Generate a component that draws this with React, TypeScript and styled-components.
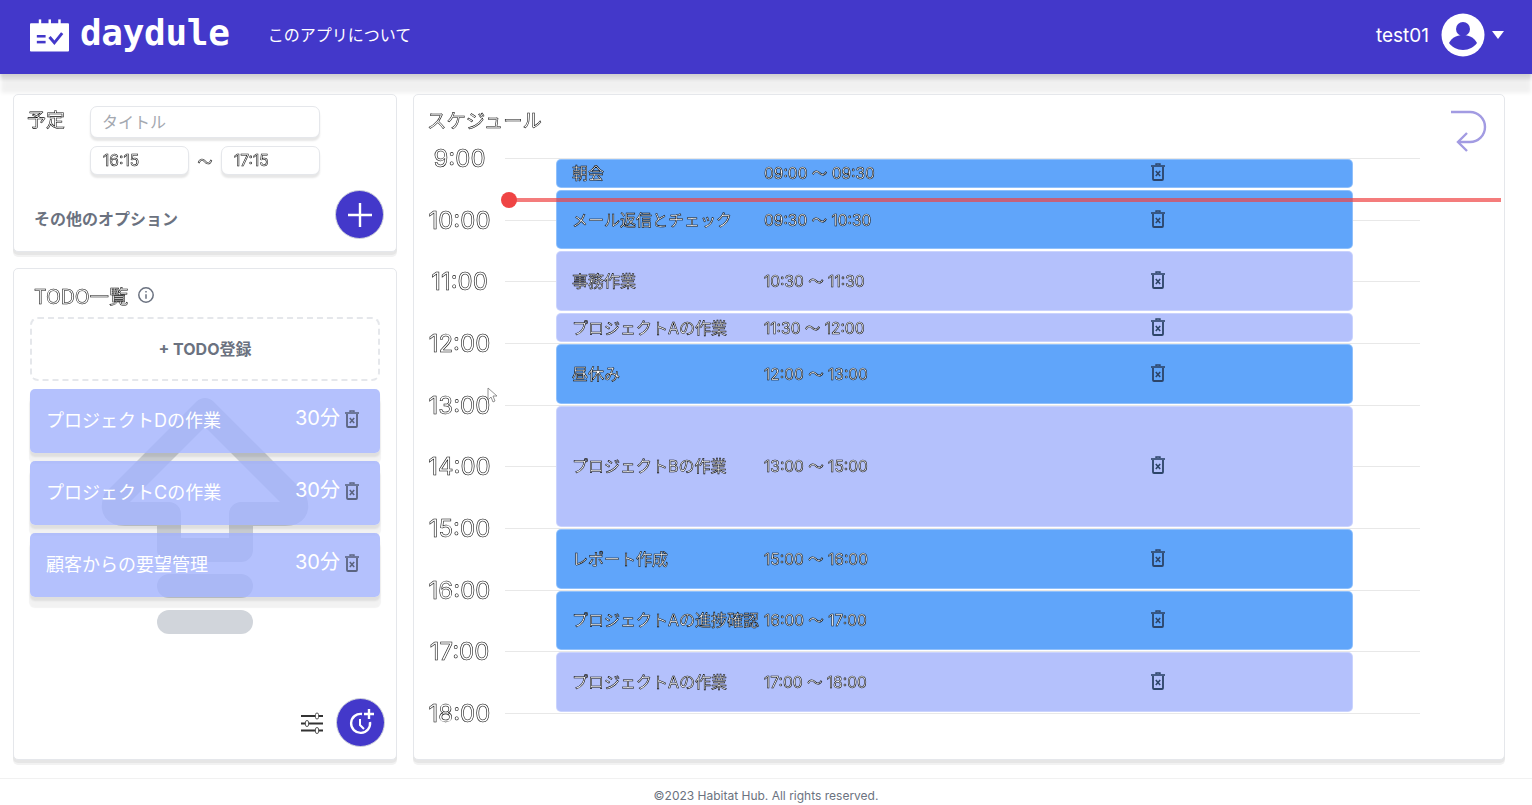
import styled, { createGlobalStyle } from "styled-components";

const GlobalStyle = createGlobalStyle`
  html, body {
    margin: 0;
    padding: 0;
    background: #fff;
    font-family: "Inter", "Noto Sans CJK JP", sans-serif;
  }
  * { box-sizing: border-box; }
`;

const HOUR = 61.67;
const HOURS = ["9:00", "10:00", "11:00", "12:00", "13:00", "14:00", "15:00", "16:00", "17:00", "18:00"];
const EVENTS = [
  { title: "朝会", time: "09:00 〜 09:30", hours: 0.5, tone: "blue" },
  { title: "メール返信とチェック", time: "09:30 〜 10:30", hours: 1, tone: "blue" },
  { title: "事務作業", time: "10:30 〜 11:30", hours: 1, tone: "lilac" },
  { title: "プロジェクトAの作業", time: "11:30 〜 12:00", hours: 0.5, tone: "lilac" },
  { title: "昼休み", time: "12:00 〜 13:00", hours: 1, tone: "blue" },
  { title: "プロジェクトBの作業", time: "13:00 〜 15:00", hours: 2, tone: "lilac" },
  { title: "レポート作成", time: "15:00 〜 16:00", hours: 1, tone: "blue" },
  { title: "プロジェクトAの進捗確認", time: "16:00 〜 17:00", hours: 1, tone: "blue" },
  { title: "プロジェクトAの作業", time: "17:00 〜 18:00", hours: 1, tone: "lilac" },
];
const TODOS = ["プロジェクトDの作業", "プロジェクトCの作業", "顧客からの要望管理"];

const Page = styled.div`
  display: flex;
  flex-direction: column;
  height: 805px;
  overflow: hidden;
`;

const Header = styled.header`
  height: 74px;
  flex: none;
  display: flex;
  align-items: center;
  padding: 0 28px 4px 30px;
  background: #4338ca;
  color: #fff;
  box-shadow: 0 2px 3px rgba(0, 0, 0, 0.08), 0 6px 3px rgba(0, 0, 0, 0.07), 0 20px 4px -1px rgba(0, 0, 0, 0.06);
`;

const Brand = styled.div`
  display: flex;
  align-items: center;
  gap: 11px;
  font-family: "DejaVu Sans Mono", monospace;
  font-size: 36px;
  font-weight: 700;
  letter-spacing: -0.3px;
  line-height: 40px;
  margin-top: -4px;
`;

const LogoMark = styled.svg`
  margin-top: 3px;
`;

const NavLink = styled.span`
  margin-left: 38px;
  font-size: 16px;
  margin-top: -2px;
`;

const UserBox = styled.div`
  margin-left: auto;
  display: flex;
  align-items: center;
  font-size: 19px;
  gap: 12px;
`;

const Caret = styled.span`
  width: 0;
  height: 0;
  border-left: 6.5px solid transparent;
  border-right: 6.5px solid transparent;
  border-top: 8px solid #fff;
  margin-left: -5px;
`;

const Main = styled.main`
  flex: 1;
  display: grid;
  grid-template-columns: 384px 1092px;
  grid-template-rows: minmax(0, 1fr);
  gap: 16px;
  padding: 20px 0 18px 13px;
  min-height: 0;
  position: relative;
`;

const Column = styled.div`
  display: flex;
  flex-direction: column;
  gap: 16px;
  min-height: 0;
`;

const Card = styled.section`
  position: relative;
  background: #fff;
  border: 1px solid #e5e7eb;
  border-radius: 5px;
  box-shadow: 0 3px 0 #e6e6e6, 0 5px 0 #f2f2f2;
`;

const OutlineText = styled.span`
  display: inline-block;
  color: #fff;
  -webkit-text-stroke: 0.55px #000;
  will-change: transform;
`;

const PlanCard = styled(Card)`
  height: 158px;
  flex: none;
  padding: 11px 12px 0 13px;
`;

const PlanRow = styled.div`
  display: flex;
  gap: 13px;
`;

const PlanLabel = styled(OutlineText)`
  font-size: 19px;
  width: 50px;
  height: 30px;
  line-height: 30px;
`;

const Fields = styled.div`
  display: grid;
  grid-template-columns: 99px 32px 99px;
  grid-template-rows: 32px 29px;
  row-gap: 8px;
  align-items: center;
`;

const Field = styled.div`
  height: 100%;
  display: flex;
  align-items: center;
  border: 1px solid #e5e7eb;
  border-radius: 7px;
  background: #fff;
  box-shadow: 0 3px 2px #e7e7e7;
  font-size: 15.5px;
`;

const TitleField = styled(Field)`
  grid-column: 1 / 4;
  padding-left: 11px;
  padding-bottom: 2px;
  font-size: 16px;
  color: #a4a8b0;
`;

const TimeField = styled(Field)`
  padding-left: 12px;
`;

const Tilde = styled(OutlineText)`
  text-align: center;
  font-size: 15px;
`;

const OptionRow = styled.div`
  display: flex;
  align-items: center;
  justify-content: space-between;
  margin-top: 15px;
  padding-left: 7px;
`;

const OptionLabel = styled.span`
  font-size: 16px;
  font-weight: 700;
  color: #6b7280;
  margin-top: 6px;
`;

const RoundButton = styled.div`
  width: 49px;
  height: 49px;
  border-radius: 50%;
  background: #4338ca;
  border: 1px solid #d1d5db;
  display: flex;
  align-items: center;
  justify-content: center;
`;

const TodoCard = styled(Card)`
  flex: 1;
  min-height: 0;
  padding: 13px 16px 0 16px;
  display: flex;
  flex-direction: column;
`;

const TodoHeading = styled.div`
  display: flex;
  align-items: center;
  gap: 9px;
  padding-left: 4px;
  height: 26px;
`;

const HeadingText = styled(OutlineText)`
  font-size: 19.4px;
`;

const AddTodo = styled.div`
  margin-top: 9px;
  height: 64px;
  border: 2px dashed #e5e7eb;
  border-radius: 8px;
  display: flex;
  align-items: center;
  justify-content: center;
  color: #6b7280;
  font-size: 16px;
  font-weight: 700;
  padding-bottom: 2px;
`;

const TodoList = styled.div`
  margin-top: 8px;
  display: flex;
  flex-direction: column;
  gap: 8px;
  position: relative;
  z-index: 1;
`;

const TodoItem = styled.div`
  height: 64px;
  border-radius: 5px;
  background: rgba(159, 176, 252, 0.78);
  box-shadow: 0 4px 2px rgba(0, 0, 0, 0.08), 0 10px 1px 1px rgba(0, 0, 0, 0.05);
  display: flex;
  align-items: center;
  color: #fff;
  padding: 0 21px 0 16px;
`;

const TodoTitle = styled.span`
  font-size: 18px;
  margin-top: -4px;
  flex: 1;
`;

const TodoMinutes = styled.span`
  font-size: 20px;
  margin-top: -10px;
  margin-right: 5px;
`;

const TodoTrash = styled.span`
  display: flex;
  margin-top: -5px;
`;

const DragGhost = styled.svg`
  position: absolute;
  left: 86px;
  top: 127px;
`;

const TodoFooter = styled.div`
  margin-top: auto;
  margin-bottom: 12px;
  display: flex;
  align-items: center;
  justify-content: flex-end;
  gap: 13px;
  margin-right: -5px;
`;

const ScheduleCard = styled(Card)`
  padding: 12px 12px 0 13px;
`;

const ScheduleTitle = styled(OutlineText)`
  font-size: 19.4px;
  display: block;
  line-height: 28px;
`;

const ReturnIcon = styled.svg`
  position: absolute;
  right: 16px;
  top: 15px;
`;

const Timeline = styled.div`
  position: relative;
  margin-top: 23px;
`;

const HourRow = styled.div`
  height: ${HOUR}px;
  display: flex;
  align-items: flex-start;
`;

const HourLabel = styled(OutlineText)`
  width: 91px;
  margin-left: -13px;
  text-align: center;
  font-size: 24px;
  line-height: 24px;
  margin-top: -11px;
`;

const HourLine = styled.div`
  width: 915px;
  border-top: 1px solid #e8e8e8;
`;

const EventStack = styled.div`
  position: absolute;
  left: 129px;
  top: 1px;
  width: 797px;
  display: flex;
  flex-direction: column;
`;

const EventBar = styled.div<{ $tone: string; $hours: number }>`
  height: ${(p) => p.$hours * HOUR - 2}px;
  margin-bottom: 2px;
  flex: none;
  display: grid;
  grid-template-columns: 192px 387px 30px;
  align-items: center;
  padding: 0 0 2px 15px;
  border-radius: 5px;
  border: 1px solid rgba(255, 255, 255, 0.3);
  background: ${(p) => (p.$tone === "blue" ? "#60a5fa" : "#b4c1fc")};
  font-size: 16px;
`;

const EventText = styled(OutlineText)`
  white-space: nowrap;
`;

const EventTime = styled(EventText)`
  font-size: 15.5px;
`;

const NowLine = styled.div`
  position: absolute;
  left: 82px;
  right: -9px;
  top: 40px;
  height: 4px;
  background: rgba(239, 68, 68, 0.7);
`;

const NowDot = styled.div`
  position: absolute;
  left: 74px;
  top: 34px;
  width: 16px;
  height: 16px;
  border-radius: 50%;
  background: #ef4444;
`;

const CursorMark = styled.svg`
  position: absolute;
  left: 60px;
  top: 229px;
`;

const Footer = styled.footer`
  height: 27px;
  flex: none;
  border-top: 1px solid #f1f1f1;
  display: flex;
  align-items: flex-end;
  justify-content: center;
  font-size: 12px;
  color: #6b7280;
  padding-bottom: 2px;
`;

const TrashIcon = ({ color }: { color: string }) => (
  <svg width="14" height="18" viewBox="0 0 14 18" fill="none" stroke={color}>
    <path d="M0 3h14" strokeWidth="1.6" />
    <path d="M5 2V1h4v1" strokeWidth="1.4" />
    <path d="M2 4v12a1 1 0 0 0 1 1h8a1 1 0 0 0 1-1V4" strokeWidth="1.8" />
    <path d="M4.8 8l4.4 5M9.2 8l-4.4 5" strokeWidth="1.6" />
  </svg>
);

const Logo = () => (
  <LogoMark width="39" height="34" viewBox="0 0 40 34" fill="#fff">
    <path d="M1 5h38a1 1 0 0 1 1 1v27a1 1 0 0 1-1 1H1a1 1 0 0 1-1-1V6a1 1 0 0 1 1-1z" />
    <rect x="9" y="1" width="2.5" height="6" />
    <rect x="19" y="1" width="2.5" height="6" />
    <rect x="29" y="1" width="2.5" height="6" />
    <rect x="7" y="17" width="9" height="2.6" fill="#4338ca" />
    <rect x="7" y="23" width="9" height="2.6" fill="#4338ca" />
    <path d="M20 19l5 6 8-10" fill="none" stroke="#4338ca" strokeWidth="3" />
  </LogoMark>
);

const App = () => {
  return (
    <Page>
      <GlobalStyle />
      <Header>
        <Brand>
          <Logo />
          daydule
        </Brand>
        <NavLink>このアプリについて</NavLink>
        <UserBox>
          test01
          <svg width="44" height="44" viewBox="0 0 44 44">
            <circle cx="22" cy="22" r="21.5" fill="#fff" />
            <circle cx="22" cy="16" r="7" fill="#4338ca" />
            <path d="M8 30c3-6 9-8 14-8s11 2 14 8c-3 4-8 7-14 7s-11-3-14-7z" fill="#4338ca" />
          </svg>
          <Caret />
        </UserBox>
      </Header>

      <Main>
        <Column>
          <PlanCard>
            <PlanRow>
              <PlanLabel>予定</PlanLabel>
              <Fields>
                <TitleField>タイトル</TitleField>
                <TimeField><OutlineText>16:15</OutlineText></TimeField>
                <Tilde>〜</Tilde>
                <TimeField><OutlineText>17:15</OutlineText></TimeField>
              </Fields>
            </PlanRow>
            <OptionRow>
              <OptionLabel>その他のオプション</OptionLabel>
              <RoundButton>
                <svg width="26" height="26" viewBox="0 0 26 26" stroke="#fff" strokeWidth="2.4">
                  <path d="M13 1v24M1 13h24" />
                </svg>
              </RoundButton>
            </OptionRow>
          </PlanCard>

          <TodoCard>
            <TodoHeading>
              <HeadingText>TODO一覧</HeadingText>
              <svg width="18" height="18" viewBox="0 0 18 18" fill="none" stroke="#6b7280" strokeWidth="1.5">
                <circle cx="9" cy="9" r="7.2" />
                <path d="M9 8.2v4.6M9 5v1.6" />
              </svg>
            </TodoHeading>
            <AddTodo>+ TODO登録</AddTodo>
            <TodoList>
              {TODOS.map((t) => (
                <TodoItem key={t}>
                  <TodoTitle>{t}</TodoTitle>
                  <TodoMinutes>30分</TodoMinutes>
                  <TodoTrash>
                    <TrashIcon color="#5b6480" />
                  </TodoTrash>
                </TodoItem>
              ))}
            </TodoList>
            <DragGhost width="210" height="240" viewBox="100 396 210 240">
              <path
                d="M205 410L295 500Q300 514 285 514H241V550H169V514H125Q110 514 115 500Z"
                fill="none"
                stroke="#d1d5db"
                strokeWidth="24"
                strokeLinejoin="round"
              />
              <rect x="157" y="574" width="96" height="24" rx="12" fill="#d1d5db" />
              <rect x="157" y="610" width="96" height="24" rx="12" fill="#d1d5db" />
            </DragGhost>
            <TodoFooter>
              <svg width="22" height="22" viewBox="0 0 22 22" fill="none" stroke="#333" strokeWidth="1.8">
                <path d="M0 4h14M18 4h4M0 11.5h4M8 11.5h14M0 18.5h14M18 18.5h4" />
                <rect x="14.5" y="1" width="3" height="6" rx="1.5" strokeWidth="0.8" />
                <rect x="4.5" y="8.5" width="3" height="6" rx="1.5" strokeWidth="0.8" />
                <rect x="14.5" y="15.5" width="3" height="6" rx="1.5" strokeWidth="0.8" />
              </svg>
              <RoundButton>
                <svg width="28" height="28" viewBox="0 0 28 28" fill="none" stroke="#fff" strokeWidth="2.4">
                  <path d="M15 5a9.5 9.5 0 1 0 8 8" />
                  <path d="M13 10v6l4 4" strokeWidth="2" />
                  <path d="M22 0v10M17 5h10" />
                </svg>
              </RoundButton>
            </TodoFooter>
          </TodoCard>
        </Column>

        <ScheduleCard>
          <ScheduleTitle>スケジュール</ScheduleTitle>
          <ReturnIcon width="38" height="44" viewBox="0 0 38 44" fill="none" stroke="#a29be2" strokeWidth="2.4">
            <path d="M1 2h19a15 15 0 0 1 0 30H9" />
            <path d="M17 23l-9 9 9 9" />
          </ReturnIcon>
          <Timeline>
            {HOURS.map((h) => (
              <HourRow key={h}>
                <HourLabel>{h}</HourLabel>
                <HourLine />
              </HourRow>
            ))}
            <EventStack>
              {EVENTS.map((e) => (
                <EventBar key={e.time} $tone={e.tone} $hours={e.hours}>
                  <EventText>{e.title}</EventText>
                  <EventTime>{e.time}</EventTime>
                  <TrashIcon color="#2c4468" />
                </EventBar>
              ))}
            </EventStack>
            <NowLine />
            <NowDot />
            <CursorMark width="12" height="18" viewBox="0 0 12 18" fill="#fff" stroke="#777" strokeWidth="0.8">
              <path d="M1 1v12l3-3 2 5 2-1-2-5h4z" />
            </CursorMark>
          </Timeline>
        </ScheduleCard>
      </Main>

      <Footer>©2023 Habitat Hub. All rights reserved.</Footer>
    </Page>
  );
};

export default App;
